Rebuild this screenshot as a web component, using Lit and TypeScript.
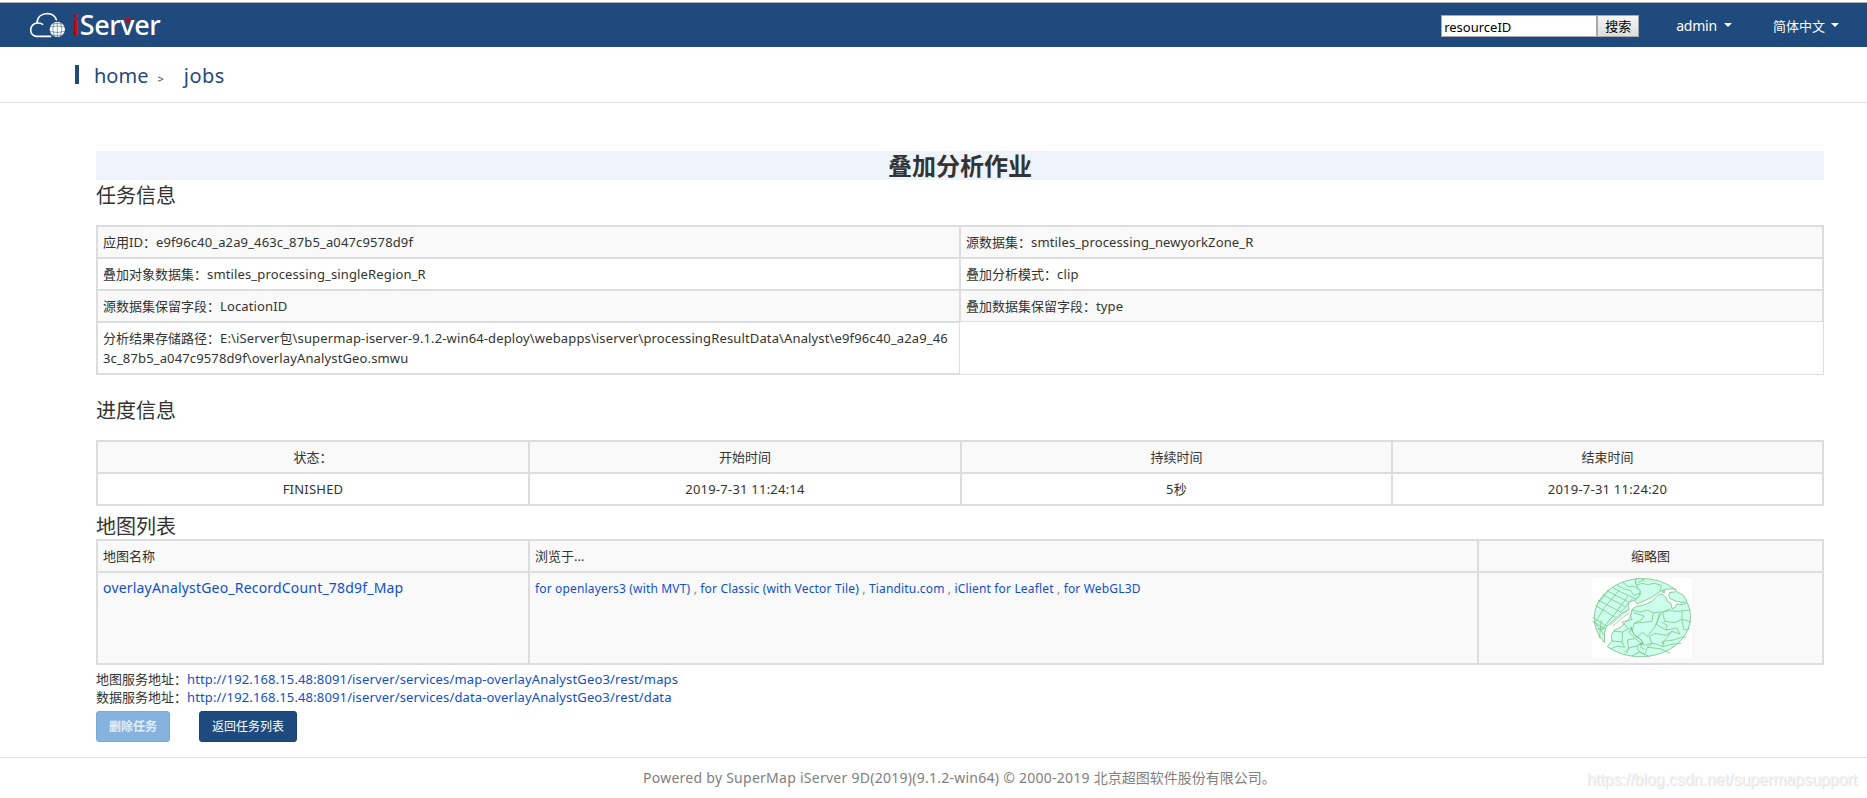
import { LitElement, html, css, svg } from "lit";
import { customElement } from "lit/decorators.js";

const infoRows: [string, string][][] = [
  [["应用ID：", "e9f96c40_a2a9_463c_87b5_a047c9578d9f"], ["源数据集：", "smtiles_processing_newyorkZone_R"]],
  [["叠加对象数据集：", "smtiles_processing_singleRegion_R"], ["叠加分析模式：", "clip"]],
  [["源数据集保留字段：", "LocationID"], ["叠加数据集保留字段：", "type"]],
];
const progress: [string, string][] = [
  ["状态：", "FINISHED"],
  ["开始时间", "2019-7-31 11:24:14"],
  ["持续时间", "5秒"],
  ["结束时间", "2019-7-31 11:24:20"],
];
const viewers = [
  "for openlayers3 (with MVT)",
  "for Classic (with Vector Tile)",
  "Tianditu.com",
  "iClient for Leaflet",
  "for WebGL3D",
];

const cloud = svg`
  <g fill="none" stroke="#fff" stroke-width="4.800" stroke-linecap="round">
    <path d="M152 107H108C86 104 87 71 111 67C112 48 126 39 142 38.500C155 39 165 46 169 57"/>
    <path d="M113 67Q122 66 128 71"/>
  </g>
  <circle cx="172" cy="86" r="23" fill="#fff"/>
  <g fill="none" stroke="#1f4a7e" stroke-width="1.500">
    <path d="M150 79Q172 72 194 79M149 92Q172 99 195 92M156 70Q172 66 188 70M156 103Q172 107 188 103"/>
    <path d="M172 63V109M163 63Q154 86 163 109M181 63Q190 86 181 109"/>
  </g>`;

const thumb = svg`
  <rect x="96" y="54" width="300" height="240" fill="#fff"/>
  <g fill="#ccffec" stroke="#7cc48a" stroke-width="2.600" stroke-linejoin="round">
    <path d="M230 56L226 66L234 86L241 92L240 106L222 121L207 126L204 138L208 148L186 160L160 182L138 200L133 222L134 248A150 120 0 0 1 230 56Z"/>
    <path d="M230 56A150 120 0 0 1 350 91L338 86L318 88L300 94L276 112L254 122L232 132L224 122L240 106L241 92L234 86L226 66Z"/>
    <path d="M328 98L350 95L370 106L381 124L368 128L346 123L331 116L326 106Z"/>
    <path d="M216 148L228 140L254 134L276 124L296 104L306 102L318 112L322 124L333 130L336 146L346 142L350 132L366 134L382 128A150 120 0 0 1 142 260L156 243L154 226L162 211L182 202L206 178L214 162Z"/>
    <path d="M308 92h6v5h-6z"/>
  </g>
  <g fill="none" stroke="#7cc48a" stroke-width="2.400" stroke-linejoin="round">
    <path d="M188 66L204 80L222 78L232 86M156 82L178 94L204 106L226 116M172 76L190 86L212 92L222 106L240 100M140 92L206 126M128 104L196 140M114 120L182 156M106 136L166 172M98 172L142 200M97 184L136 206"/>
    <path d="M178 90L134 142L104 190M204 108L164 162L122 212M218 116L180 160M148 88L112 132M124 180L118 234M106 190L132 224M110 208L132 206"/>
    <path d="M234 68L252 58M232 74L248 70L262 74L284 70L304 76L300 92M248 58L256 66"/>
    <path d="M216 150L240 156L262 150L280 158L304 156L328 152L352 154L392 150M330 146L308 158L314 184M280 158L276 184L222 190L218 208L206 206L186 186L216 178L210 162M222 190L244 180L252 168L220 158M304 156L284 202L262 230L248 216L226 236L206 216L218 208"/>
    <path d="M298 160L290 194L318 210L322 196L304 186M314 184L344 188L366 178L394 186M366 154L366 182L372 210L390 206M318 210L350 204L360 222L336 214L318 226L284 220L268 230L276 250L254 256L238 246L226 236"/>
    <path d="M336 212L322 232L310 244L308 260L288 252L276 250M312 244L340 240L370 230L378 232M308 260L340 252L364 250M276 250L262 262L300 266L330 280M262 262L254 284L238 276L230 258L206 264L200 280M246 248L242 262L254 268"/>
    <path d="M156 243L186 246L194 262L172 258L154 266M186 246L188 216L206 206M188 216L162 214M206 264L202 240L224 236M230 258L244 250M216 288L238 276L268 290M192 278L206 264"/>
    <path d="M150 196L204 150M158 198L212 154" stroke-width="2"/>
  </g>
  <path d="M212 200L222 224L240 236L250 250L236 254M306 244L312 252" fill="none" stroke="#6cba7c" stroke-width="3"/>`;

@customElement("app-root")
export class AppRoot extends LitElement {
  static styles = css`
    :host {
      display: block;
      height: 798px;
      overflow: hidden;
      background: #fff;
      color: #333;
      font: 13px/20px "Noto Sans", "Noto Sans CJK SC", sans-serif;
      letter-spacing: 0;
      white-space: nowrap;
    }
    .en { letter-spacing: 0.14px; }
    a { color: #0f4fcd; text-decoration: none; }
    .top {
      box-sizing: border-box;
      height: 47px;
      border-top: 2px solid #fff;
      background: #1f4a7e;
      box-shadow: inset 0 1px #b3adb0;
      display: flex;
      align-items: center;
      padding: 0 28px 0 30px;
      color: #fff;
    }
    .cloud { width: 36px; height: 26px; flex: none; }
    .brand {
      position: relative;
      margin-left: 6px;
      font-size: 27px;
      line-height: 40px;
      letter-spacing: -0.4px;
      font-weight: 500;
    }
    .brand .i { color: #d7000f; font-weight: 600; margin-right: 0.5px; }
    .notch {
      position: absolute;
      left: 53px;
      top: 12px;
      border: 3.500px solid transparent;
      border-top: 7px solid #d7000f;
      border-bottom: 0;
    }
    .grow { flex: 1; }
    .field, .search {
      box-sizing: border-box;
      height: 22px;
      border: 1px solid #a9a9a9;
      color: #000;
      margin-top: 3px;
    }
    .field { width: 156px; background: #fff; padding: 1px 2px; line-height: 21px; }
    .search {
      width: 42px;
      line-height: 20px;
      text-align: center;
      background: linear-gradient(#f6f6f6, #dedede);
    }
    .menu { display: flex; align-items: center; gap: 7px; line-height: 22px; margin-top: 2px; }
    .menu.admin { font-size: 14px; margin: 2px 41px 0 37px; letter-spacing: -0.2px; }
    .menu.lang { gap: 6px; }
    .caret { border: 4px solid transparent; border-top-color: #fff; border-bottom: 0; margin-top: -2px; }
    .crumbs {
      box-sizing: border-box;
      height: 56px;
      border-bottom: 1px solid #e2e2e2;
      display: flex;
      align-items: center;
      padding: 0 0 0 75px;
      font-size: 20px;
      color: #1f4a7e;
    }
    .crumbs span { padding-top: 2px; }
    .crumbs .mark { width: 4px; height: 19px; padding: 0; background: #1f4a7e; margin: 0 15px 1px 0; }
    .crumbs .sep { color: #444; font-size: 11px; margin: 6px 20px 0 9px; }
    .jobs { letter-spacing: 0.5px; }
    main { padding: 48px 43px 0 96px; }
    h1 {
      margin: 0;
      height: 29px;
      background: #eff4fc;
      font-size: 24px;
      line-height: 30px;
      font-weight: 700;
      text-align: center;
    }
    h2 { margin: 0; font-size: 20px; line-height: 30px; font-weight: 400; padding: 1px 0 14px; }
    .later { padding-top: 21px; }
    .tight { padding: 8px 0 0; line-height: 25px; }
    .grid { display: grid; gap: 2px; padding: 2px; background: #ddd; }
    .grid > div { background: #fff; padding: 5px; }
    .grid > .g { background: #f9f9f9; }
    .info { grid-template-columns: 861px 861px; padding-bottom: 0; }
    .last {
      display: grid;
      grid-template-columns: 862px 1fr;
      border: 2px solid #ddd;
      border-width: 2px 1px 1px 2px;
      height: 51px;
    }
    .path { border: solid #ddd; border-width: 0 1px 1px 0; padding: 5px 5px 4px; }
    .last .rest { background: #fff; margin-top: -1px; }
    .prog { grid-template-columns: 430px 430px 429px 429px; text-align: center; }
    .prog .en { letter-spacing: 0.22px; }
    .maps { grid-template-columns: 430px 947px 343px; }
    .mid { text-align: center; }
    .name { font-size: 14px; letter-spacing: 0.19px; }
    .view { font-size: 12px; letter-spacing: 0.165px; color: #888; }
    .grid > .tall { height: 80px; padding: 5px; }
    .grid > .view { height: 79px; padding-top: 6px; }
    .shot { width: 100px; height: 80px; display: block; margin-left: 108px; }
    .urls { padding-top: 5px; line-height: 18px; }
    .buttons { display: flex; gap: 29px; margin-top: 5px; font-size: 12px; line-height: 30px; }
    .btn {
      box-sizing: border-box;
      height: 31px;
      border-radius: 3px;
      border: 1px solid #1b4373;
      background: #1f4a7e;
      color: #fff;
      width: 98px;
      text-align: center;
    }
    .off { width: 74px; background: #86b3dd; border-color: #7ba9d5; color: #e2eefb; font-weight: 700; }
    footer {
      box-sizing: border-box;
      height: 41px;
      margin-top: 15px;
      border-top: 1px solid #e2e2e2;
      position: relative;
      padding: 10px 0 0 643px;
      font-size: 14px;
      color: #808080;
    }
    .power { letter-spacing: 0.26px; }
    .stamp {
      position: absolute;
      right: 10px;
      top: 12px;
      font: 16px/20px "Liberation Sans", sans-serif;
      letter-spacing: -0.05px;
      color: #f3f3f3;
      text-shadow: 1px 1px 0 #e2e2e2;
    }
  `;

  render() {
    return html`
      <div class="top">
        <svg class="cloud" viewBox="90 34 108 78">${cloud}</svg>
        <div class="brand"><span class="i">i</span>Server<span class="notch"></span></div>
        <div class="grow"></div>
        <div class="field">resourceID</div>
        <div class="search">搜索</div>
        <div class="menu admin">admin<span class="caret"></span></div>
        <div class="menu lang">简体中文<span class="caret"></span></div>
      </div>
      <div class="crumbs">
        <span class="mark"></span><span>home</span><span class="sep">&gt;</span><span class="jobs">jobs</span>
      </div>
      <main>
        <h1>叠加分析作业</h1>
        <h2>任务信息</h2>
        <div class="grid info">
          ${infoRows.map((row, i) =>
            row.map(([k, v]) => html`<div class=${i % 2 ? "" : "g"}>${k}<span class="en">${v}</span></div>`)
          )}
        </div>
        <div class="last">
          <div class="path">分析结果存储路径：<span class="en">E:\\iServer包\\supermap-iserver-9.1.2-win64-deploy\\webapps\\iserver\\processingResultData\\Analyst\\e9f96c40_a2a9_46<br />3c_87b5_a047c9578d9f\\overlayAnalystGeo.smwu</span></div>
          <div class="rest"></div>
        </div>
        <h2 class="later">进度信息</h2>
        <div class="grid prog">
          ${progress.map(([k]) => html`<div class="g">${k}</div>`)}
          ${progress.map(([, v]) => html`<div class="en">${v}</div>`)}
        </div>
        <h2 class="tight">地图列表</h2>
        <div class="grid maps">
          <div class="g">地图名称</div>
          <div class="g">浏览于...</div>
          <div class="g mid">缩略图</div>
          <div class="g tall name"><a>overlayAnalystGeo_RecordCount_78d9f_Map</a></div>
          <div class="g tall view">${viewers.map((v, i) => html`${i ? " , " : ""}<a>${v}</a>`)}</div>
          <div class="g tall"><svg class="shot" viewBox="96 54 300 240">${thumb}</svg></div>
        </div>
        <div class="urls">
          <div>地图服务地址：<a class="en">http://192.168.15.48:8091/iserver/services/map-overlayAnalystGeo3/rest/maps</a></div>
          <div>数据服务地址：<a class="en">http://192.168.15.48:8091/iserver/services/data-overlayAnalystGeo3/rest/data</a></div>
        </div>
        <div class="buttons">
          <div class="btn off">删除任务</div>
          <div class="btn">返回任务列表</div>
        </div>
      </main>
      <footer>
        <span class="power">Powered by SuperMap iServer 9D(2019)(9.1.2-win64) © 2000-2019 </span>北京超图软件股份有限公司。
        <span class="stamp">https://blog.csdn.net/supermapsupport</span>
      </footer>
    `;
  }
}
